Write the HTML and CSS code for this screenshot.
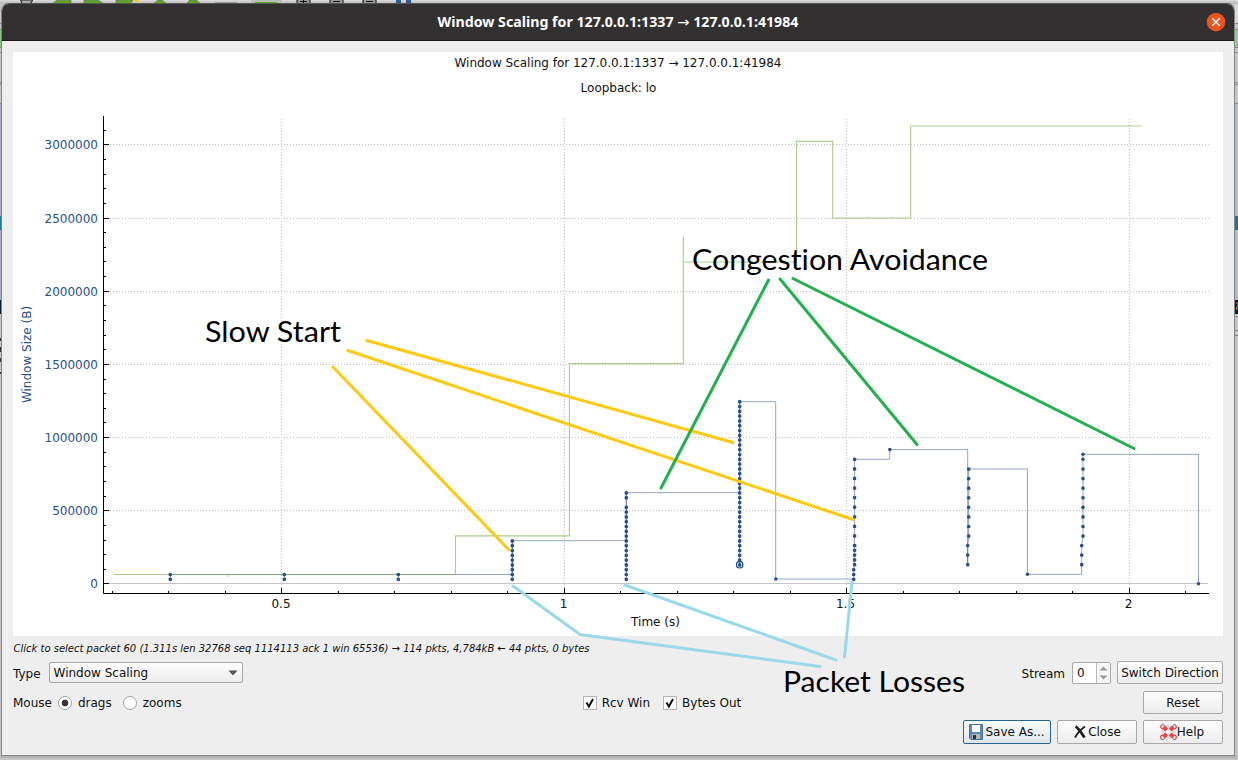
FILE: index.html
```html
<!DOCTYPE html>
<html lang="en">
<head>
<meta charset="utf-8">
<title>Window Scaling for 127.0.0.1:1337 → 127.0.0.1:41984</title>
<link rel="stylesheet" href="styles.css">
</head>
<body>
<svg class="backdrop" width="1238" height="760" viewBox="0 0 1238 760" aria-hidden="true">
  <defs>
    <linearGradient id="topShade" x2="0" y2="1"><stop offset="0" stop-color="#dcdcdc"/><stop offset="1" stop-color="#b4b4b4"/></linearGradient>
    <linearGradient id="bottomShade" x2="0" y2="1"><stop offset="0" stop-color="#adadad"/><stop offset="1" stop-color="#cbcbcb"/></linearGradient>
  </defs>
  <rect width="1238" height="760" fill="#c6c6c6"/>
  <rect width="1238" height="4" fill="url(#topShade)"/>
  <path d="M20.500 0q1 4 3 4h5q3 0 4-4z" fill="#aaa" stroke="#222"/>
  <path d="M52 4l5-4h14v4zM84 4V0h14l6 4zM116 4V0h17l-3 4zM153 4l5-4h4l5 4zM186 4l3-3V0h8v1l4 3z" fill="#5fa51e" stroke="#777" stroke-width=".8"/>
  <path d="M134 0h5v2h-5z" fill="#e4d04a"/>
  <path d="M215 2.500h22" stroke="#999"/><path d="M251 0v4h31V0z" fill="#bcbcbc"/><path d="M255 2.500h22" stroke="#56ad1a"/>
  <g fill="#999" stroke="#111"><path d="M297 -2v5.500h13V-2zM330 -2v5.500h13V-2zM363 -2v5.500h13V-2z"/><path d="M300 1.500h7M303.500-1v4M333 1.500h7M366 1.500h7"/></g>
  <path d="M396 0h5v4h-5zM406 0h5v4h-5z" fill="#2e5c94"/>
  <g id="edge-left">
    <path d="M0 30h2v17H0z" fill="#80c481"/><path d="M0 23.500h2M0 29.500h2M0 47.500h2M0 52.500h2M0 82.500h2M0 84.500h2M0 103.500h2" stroke="#858585"/>
    <path d="M0 104h2v112H0zM0 230h2v70H0z" fill="#aaa8c4"/><path d="M0 216h2v14H0z" fill="#1976a8"/><path d="M0 300h2v14H0z" fill="#061d27"/>
    <path d="M0 314h2v92H0z" fill="#c8c8c8"/><path d="M0 338h2v3H0zM0 347h2v5H0zM0 358h2v4H0zM0 372h2v2H0z" fill="#333"/>
  </g>
  <g id="edge-right">
    <path d="M1235 4h3v19h-3z" fill="#dadada"/><path d="M1235 30h3v17h-3z" fill="#8cd18d"/><path d="M1234 23.500h4M1234 29.500h4M1234 47.500h4M1234 52.500h4M1234 82.500h4M1234 84.500h4M1234 103.500h4M1234 316.500h4M1234 330.500h4M1234 335.500h4" stroke="#888"/>
    <path d="M1235 104h3v112h-3zM1235 230h3v70h-3z" fill="#bab8d1"/><path d="M1235 216h3v14h-3z" fill="#1f71a2"/><path d="M1235 300h3v14h-3z" fill="#061f29"/><path d="M1236 303h2v2l-2 4h2" fill="none" stroke="#d8695c"/>
  </g>
  <rect y="756" width="1238" height="4" fill="url(#bottomShade)"/>
</svg>

<main class="dialog">
  <header class="titlebar">
    <svg class="title-text" width="364" height="24"><text x="1.500" y="17" textLength="361" lengthAdjust="spacingAndGlyphs">Window Scaling for 127.0.0.1:1337 <tspan class="arrow">→</tspan> 127.0.0.1:41984</text></svg>
    <button class="close-window" aria-label="Close window"><svg width="20" height="20"><circle cx="10" cy="10" r="9.300" fill="#e95420"/><path d="M6.300 6.300l7.400 7.400m0-7.400l-7.400 7.400" stroke="#fff" stroke-width="1.500"/></svg></button>
  </header>

  <section class="content">
    <svg class="chart" viewBox="13 52 1210 584" width="1210" height="584">
      <rect x="13" y="52" width="1210" height="584" fill="#fff"/>
      <text x="618" y="67" text-anchor="middle" textLength="327">Window Scaling for 127.0.0.1:1337 → 127.0.0.1:41984</text>
      <text x="618.500" y="92" text-anchor="middle">Loopback: lo</text>
      <g class="grid">
        <path d="M110 144.500H1209M110 218.500H1209M110 291.500H1209M110 364.500H1209M110 437.500H1209M110 510.500H1209"/>
        <path d="M281.500 119V593M564.500 119V593M846.500 119V593M1129.500 119V593"/>
      </g>
      <path d="M109 583.500H1208" stroke="#c5c5c5"/>
      <g class="axis">
        <path d="M103.500 116V593.500H1209"/>
        <path d="M103 144.500h6M103 218.500h6M103 291.500h6M103 364.500h6M103 437.500h6M103 510.500h6M103 583.500h6M281.500 593v-5M564.500 593v-5M846.500 593v-5M1129.500 593v-5"/>
        <path d="M103 130.500h3M103 159.500h3M103 174.500h3M103 188.500h3M103 203.500h3M103 232.500h3M103 247.500h3M103 261.500h3M103 276.500h3M103 305.500h3M103 320.500h3M103 335.500h3M103 349.500h3M103 379.500h3M103 393.500h3M103 408.500h3M103 422.500h3M103 452.500h3M103 466.500h3M103 481.500h3M103 496.500h3M103 525.500h3M103 540.500h3M103 554.500h3M103 569.500h3"/>
        <path d="M112.500 593v-2M168.500 593v-2M225.500 593v-2M338.500 593v-2M394.500 593v-2M451.500 593v-2M507.500 593v-2M620.500 593v-2M677.500 593v-2M733.500 593v-2M790.500 593v-2M903.500 593v-2M959.500 593v-2M1016.500 593v-2M1072.500 593v-2M1185.500 593v-2"/>
      </g>
      <g class="y-labels"><text x="98" y="149">3000000</text><text x="98" y="223">2500000</text><text x="98" y="296">2000000</text><text x="98" y="369">1500000</text><text x="98" y="442">1000000</text><text x="98" y="515">500000</text><text x="98" y="588">0</text></g>
      <g class="x-labels"><text x="281" y="608">0.5</text><text x="563.500" y="608">1</text><text x="845.500" y="608">1.5</text><text x="1128.500" y="608">2</text><text x="655.500" y="626">Time (s)</text></g>
      <text class="y-title" transform="translate(31 354.500) rotate(-90)" text-anchor="middle">Window Size (B)</text>

      <path class="received" d="M170 574.500H512.300V540.700H626.300V492.700H739.700V401.700H775.700V579H853.700L854.600 545V459.300H889.800V449.600H967.700V564.500V545L968.700 536V469H1027.500V574.300H1081.700V545L1083 536V454.300H1198.500V583.500"/>
      <path class="window" d="M113.500 574.500H455.500V535.900H569.400V440V363.600H683.300V237V262H796.500V141.400H832.700V218H910.700V126H1141.500M227.500 574v3M569.400 440V364"/>
      <g class="stems"><path d="M170.300 574.500V579M284.300 574.500V579M398.300 574.500V579M512.300 541V579M626.300 493V579M739.700 402V565"/></g>
      <g class="dots single">
        <path d="M170.300 574.500v4.900M284.300 574.500v4.900M398.300 574.500v4.900M512.300 540.900v38.600M626.300 492.900v4.900M626.300 507.300v72.200M739.700 401.700v163.400M854.600 545.500v19.400M853.700 569.700v9.800"/>
      </g>
      <g class="dots double">
        <path d="M854.600 459.300v86.600M968.700 469v67.500M967.700 545.500v19.400M1083 469v67.500M1081.700 545.500v19.400"/>
      </g>
      <g fill="#27508c"><circle cx="775.800" cy="579" r="1.800"/><circle cx="889.800" cy="449.600" r="1.800"/><circle cx="1027.500" cy="574.300" r="1.800"/><circle cx="1083" cy="454.300" r="1.800"/><circle cx="1083" cy="459.300" r="1.800"/><circle cx="1198.500" cy="583.700" r="1.800"/></g>
      <circle cx="739.700" cy="564.700" r="3.200" fill="none" stroke="#27508c" stroke-width="1.300"/>
    </svg>

    <p class="hint"><svg width="600" height="20"><text x="0.500" y="16" textLength="576" lengthAdjust="spacingAndGlyphs">Click to select packet 60 (1.311s len 32768 seq 1114113 ack 1 win 65536) → 114 pkts, 4,784kB ← 44 pkts, 0 bytes</text></svg></p>

    <div class="row type-row">
      <label class="low">Type</label>
      <div class="select"><span>Window Scaling</span><svg width="10" height="6"><path d="M0.500 .5h9l-4.500 5z" fill="#555"/></svg></div>
      <span class="stream-label low">Stream</span>
      <div class="spin"><span>0</span><i><svg width="13" height="20"><path d="M2.500 7.500L6.500 3.500 10.500 7.500zM2.500 12.500h8L6.500 16.500z" fill="#999"/></svg></i></div>
      <button class="btn direction">Switch Direction</button>
    </div>

    <div class="row mouse-row">
      <span>Mouse</span>
      <label class="radio first"><i class="on"></i>drags</label>
      <label class="radio second"><i></i>zooms</label>
      <label class="check rcv"><i><svg width="12" height="12"><path d="M2.500 5.500l2.400 4L9 2" fill="none" stroke="#111" stroke-width="2"/></svg></i>Rcv Win</label>
      <label class="check bytes"><i><svg width="12" height="12"><path d="M2.500 5.500l2.400 4L9 2" fill="none" stroke="#111" stroke-width="2"/></svg></i>Bytes Out</label>
      <button class="btn reset">Reset</button>
    </div>

    <footer class="actions">
      <button class="btn save"><svg width="15" height="16"><path d="M.5 .5h13v15H2L.5 14z" fill="#5c88bd" stroke="#48709f"/><path d="M3 1h8v7H3z" fill="#fff"/><path d="M3 10h8v5H3z" fill="#b6b8ae"/><path d="M4 11h3v4H4z" fill="#273545"/></svg>Save As...</button>
      <button class="btn close"><svg width="14" height="14"><path d="M2.500 1.500Q5 2.500 11.500 12.500" fill="none" stroke="#1c1f1f" stroke-width="2.800"/><path d="M12 1.500Q6 5.500 2 12.500" fill="none" stroke="#1c1f1f" stroke-width="1.900"/></svg>Close</button>
      <button class="btn help"><svg width="17" height="16"><circle cx="8.500" cy="8" r="5.300" fill="none" stroke="#dedede" stroke-width="4"/><path d="M3.500 3l3.200 3.200M13.500 3l-3.200 3.200M3.500 13l3.200-3.200M13.500 13l-3.200-3.200" stroke="#ed4344" stroke-width="4"/><path d="M4.500 1.500Q1.500-.5.800 2T2.500 5M12.500 1.500q3-2 3.700.500T14.500 5M2.500 11Q0 11 .8 14T4.500 14.500M14.500 11q2.500 0 1.700 3T12.500 14.500" fill="none" stroke="#c92631"/></svg>Help</button>
    </footer>
  </section>
</main>

<svg class="annotations" width="1238" height="760" viewBox="0 0 1238 760">
  <g stroke="#ffc90e"><path d="M333 367L509 550M348 350.500L853 519.500M367 340.500L733 442.500"/></g>
  <g stroke="#22b14c"><path d="M768.500 280L661 488M780 279L917 444.500M793 278.500L1134 448.500"/></g>
  <g stroke="#99d9ea"><path d="M513 586L580 634.500L820 666.500M625 585L836 660M852 582L844.500 657"/></g>
  <text x="205" y="342" textLength="136" lengthAdjust="spacingAndGlyphs">Slow Start</text>
  <text x="692" y="270" textLength="296" lengthAdjust="spacingAndGlyphs">Congestion Avoidance</text>
  <text x="783" y="692" textLength="182" lengthAdjust="spacingAndGlyphs">Packet Losses</text>
</svg>
</body>
</html>
```

FILE: styles.css
```css
* { box-sizing: border-box; }
body {
  margin: 0;
  width: 1238px;
  height: 760px;
  overflow: hidden;
  position: relative;
  padding: 3px 0 0 1px;
  font: 12px "DejaVu Sans", sans-serif;
  color: #111;
}
svg { display: block; flex: none; }
.backdrop { position: absolute; left: 0; top: 0; z-index: -1; }
.dialog {
  width: 1234px;
  height: 753px;
  background: #eee;
  border: 1px solid #858585;
  border-top-color: #555;
  border-radius: 8px 8px 0 0;
  overflow: hidden;
}
.titlebar {
  height: 37px;
  background: #333031;
  border-bottom: 1px solid #1c1a1b;
  display: grid;
  grid-template-columns: 434px 1fr 28px;
  align-items: center;
}
.title-text { grid-column: 2; }
.title-text text { font: bold 13.5px "Noto Sans", sans-serif; fill: #fff; }
.title-text .arrow { font: 14px "DejaVu Sans", sans-serif; }
.close-window { padding: 0; border: 0; background: none; }
.content { padding: 11px 10px 0 11px; }
.chart text { font: 12px "DejaVu Sans", sans-serif; fill: #111; }
.chart .y-labels text { fill: #27508c; text-anchor: end; }
.chart .x-labels text { text-anchor: middle; }
.chart .y-title { fill: #27508c; }
.grid { stroke: #bfbfbf; stroke-dasharray: 1 2; fill: none; }
.axis { stroke: #000; fill: none; }
.received { fill: none; stroke: #27508c; stroke-opacity: .5; }
.window { fill: none; stroke: #6fae35; stroke-opacity: .6; stroke-width: 1.1; }
.stems { stroke: #27508c; stroke-opacity: .6; }
.dots { fill: none; stroke: #27508c; stroke-width: 3.7; stroke-linecap: round; }
.single { stroke-dasharray: 0 4.8; }
.double { stroke-dasharray: 0 9.58; }
.hint { margin: 0; height: 25px; }
.hint text { font: italic 10.7px "DejaVu Sans", sans-serif; fill: #111; }
.row { display: flex; align-items: center; width: 1210px; }
.type-row { height: 23px; }
.low { padding-top: 2px; }
.select {
  width: 194px;
  height: 21px;
  margin-left: 8px;
  padding: 0 4px;
  display: flex;
  align-items: center;
  justify-content: space-between;
  border: 1px solid #a8a8a8;
  border-radius: 2px;
  background: linear-gradient(#fdfdfd, #ededed);
}
.stream-label { margin-left: auto; }
.spin {
  width: 39px;
  height: 22px;
  margin: 1px 6px 0 7px;
  padding-left: 4px;
  display: flex;
  align-items: center;
  justify-content: space-between;
  border: 1px solid #a8a8a8;
  border-radius: 2px;
  background: #fff;
}
.spin i { border-left: 1px solid #bbb; background: #f5f5f5; }
.btn {
  padding: 0;
  display: flex;
  align-items: center;
  justify-content: center;
  color: #111;
  font: 12px "DejaVu Sans", sans-serif;
  white-space: nowrap;
  border: 1px solid #a8a8a8;
  border-radius: 2px;
  background: linear-gradient(#fdfdfd, #ededed);
}
.direction { width: 106px; height: 23px; }
.mouse-row { height: 23px; margin-top: 7px; }
.radio, .check { display: flex; align-items: center; }
.radio i {
  width: 14px;
  height: 14px;
  margin-right: 6px;
  border: 1px solid #a3a3a3;
  border-radius: 50%;
  background: #fff;
}
.radio .on { background: radial-gradient(circle, #383838 0 3px, #fff 3.7px); }
.radio.first { margin-left: 6px; }
.radio.second { margin-left: 11px; }
.check i {
  width: 14px;
  height: 14px;
  margin-right: 5px;
  border: 1px solid #b5b5b5;
  background: #fff;
}
.rcv { margin-left: 401px; }
.bytes { margin-left: 13px; }
.reset { width: 80px; height: 23px; margin-left: auto; }
.actions { display: flex; justify-content: flex-end; gap: 6px; margin-top: 6px; width: 1210px; }
.actions .btn { width: 80px; height: 24px; }
.actions .save { width: 88px; border-color: #246795; background: linear-gradient(#f9fcff, #dfe5e9); gap: 1px; }
.actions .close { gap: 1px; }
.actions .help { padding-right: 2px; }
.annotations { position: absolute; left: 0; top: 0; pointer-events: none; }
.annotations path { fill: none; stroke-width: 3; stroke-linecap: round; stroke-linejoin: round; }
.annotations text { font: 28.5px Lato, sans-serif; font-variant-ligatures: none; fill: #000; }
```
